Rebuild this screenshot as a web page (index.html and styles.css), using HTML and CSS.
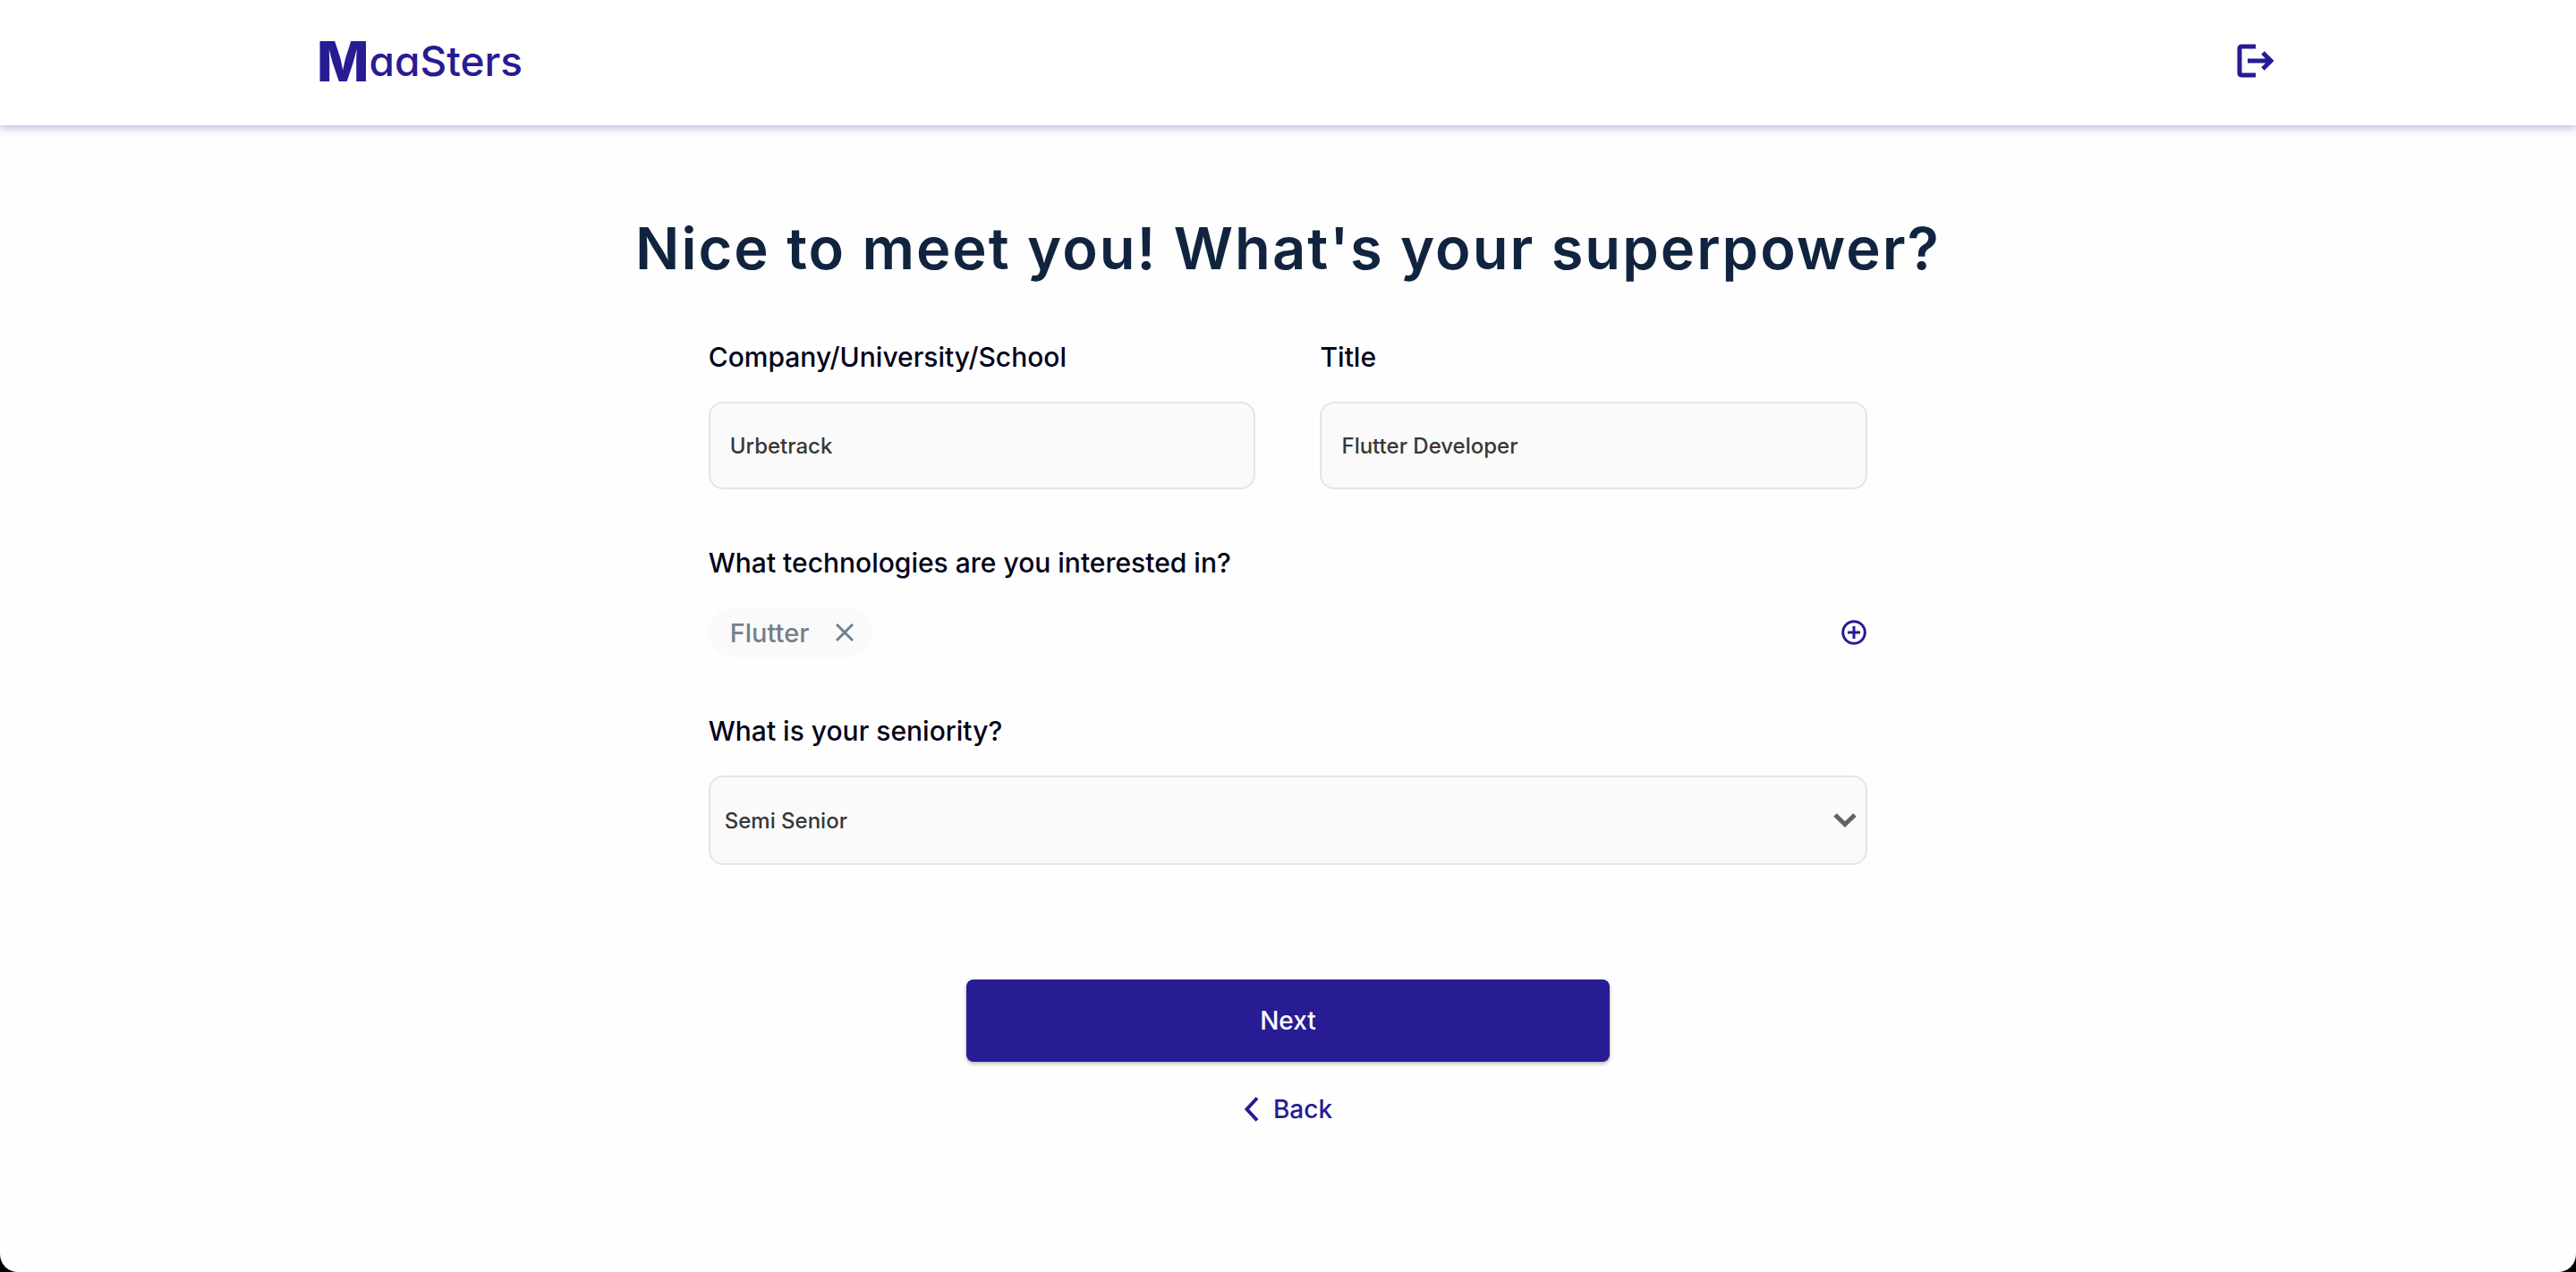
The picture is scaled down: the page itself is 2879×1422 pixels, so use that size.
FILE: index.html
```html
<!DOCTYPE html>
<html lang="en">
<head>
  <meta charset="utf-8">
  <meta name="viewport" content="width=device-width, initial-scale=1">
  <title>MaaSters</title>
  <link rel="stylesheet" href="styles.css">
</head>
<body>
  <div class="page">
    <header class="header">
      <a class="logo" href="#"><span class="logo-initial">M</span><span class="logo-rest">aaSters</span></a>
      <button class="icon-button" type="button" aria-label="Log out">
        <svg width="42" height="38" viewBox="0 0 42 38" fill="none" stroke="currentColor" stroke-width="5">
          <path d="M21 3H5.500Q3 3 3 5.500V32.500Q3 35 5.500 35H21"/>
          <path d="M12 19H37M29 10L38 19L29 28"/>
        </svg>
      </button>
    </header>
    <main class="content">
      <h1 class="heading">Nice to meet you! What's your superpower?</h1>
      <form class="form">
        <div class="pair">
          <div class="field">
            <label class="label" for="company">Company/University/School</label>
            <input class="control" id="company" type="text" value="Urbetrack">
          </div>
          <div class="field">
            <label class="label" for="title">Title</label>
            <input class="control" id="title" type="text" value="Flutter Developer">
          </div>
        </div>
        <section class="field" aria-labelledby="technologies">
          <h2 class="label" id="technologies">What technologies are you interested in?</h2>
          <div class="chips">
            <span class="chip">Flutter
              <button class="icon-button" type="button" aria-label="Remove Flutter">
                <svg width="20" height="20" viewBox="0 0 20 20" fill="none" stroke="currentColor" stroke-width="3">
                  <path d="M1 1L19 19M19 1L1 19"/>
                </svg>
              </button>
            </span>
            <button class="icon-button" type="button" aria-label="Add technology">
              <svg width="29" height="28" viewBox="0 0 29 28" fill="none" stroke="currentColor" stroke-width="3">
                <circle cx="14" cy="14" r="12.300"/>
                <path d="M7 14H21M14 7V21"/>
              </svg>
            </button>
          </div>
        </section>
        <div class="field">
          <label class="label" for="seniority">What is your seniority?</label>
          <div class="select">
            <select class="control control-select" id="seniority">
              <option>Junior</option>
              <option selected>Semi Senior</option>
              <option>Senior</option>
            </select>
            <svg class="select-arrow" width="26" height="18" viewBox="0 0 26 18" fill="none" stroke="currentColor" stroke-width="5">
              <path d="M2 3L13 13.500L24 3"/>
            </svg>
          </div>
        </div>
        <div class="actions">
          <button class="next" type="submit">Next</button>
          <button class="back" type="button">
            <svg width="17" height="28" viewBox="0 0 17 28" fill="none" stroke="currentColor" stroke-width="4">
              <path d="M15 1.500L3.500 14L15 26.500"/>
            </svg>
            Back
          </button>
        </div>
      </form>
    </main>
  </div>
</body>
</html>
```
FILE: styles.css
```css
* {
  box-sizing: border-box;
}

html {
  background: #000;
}

body {
  margin: 0;
  font-family: Inter, "Liberation Sans", sans-serif;
  font-weight: 500;
  color: #03031a;
}

button,
input,
select {
  font: inherit;
  color: inherit;
}

.page {
  min-height: 100vh;
  background: #fefefe;
  border-radius: 0 0 20px 20px;
}

.header {
  display: flex;
  align-items: center;
  justify-content: space-between;
  height: 140px;
  padding: 0 11.700% 4px 12.300%;
  background: #fff;
  box-shadow: 0 4px 8px rgba(39, 28, 147, 0.25);
  color: #271c93;
}

.logo {
  display: flex;
  align-items: center;
  color: inherit;
  text-decoration: none;
}

.logo-initial {
  font-size: 62px;
  font-weight: 800;
}

.logo-rest {
  font-size: 46px;
  font-feature-settings: "cv11";
}

.icon-button {
  display: flex;
  padding: 0;
  border: 0;
  background: none;
  cursor: pointer;
}

.content {
  display: flex;
  flex-direction: column;
  align-items: center;
  padding: 96px 24px;
}

.heading {
  margin: 0;
  font-size: 65px;
  line-height: 84px;
  font-weight: 600;
  letter-spacing: 2px;
  color: #11243f;
}

.form {
  display: flex;
  flex-direction: column;
  gap: 62px;
  width: 45vw;
  margin-top: 59px;
}

.pair {
  display: grid;
  grid-template-columns: 1fr 1fr;
  gap: 72px;
}

.field {
  display: flex;
  flex-direction: column;
  gap: 30px;
}

.label {
  margin: 0;
  font-size: 30px;
  line-height: 40px;
  font-weight: 500;
}

.control {
  width: 100%;
  height: 98px;
  padding: 0 22px;
  border: 2px solid #e4e4ea;
  border-radius: 16px;
  background: #fafafa;
  font-size: 24px;
  color: #373737;
}

.chips {
  display: flex;
  align-items: center;
  justify-content: space-between;
}

.chip {
  display: flex;
  align-items: center;
  gap: 30px;
  height: 56px;
  padding: 0 22px 0 24px;
  border-radius: 28px;
  background: #fafafa;
  font-size: 29px;
  color: #71808e;
}

.chips > .icon-button {
  color: #271c93;
}

.select {
  display: grid;
  align-items: center;
}

.select > * {
  grid-area: 1 / 1;
}

.control-select {
  height: 100px;
  padding: 0 16px;
  appearance: none;
}

.select-arrow {
  justify-self: end;
  margin-right: 12px;
  color: #626262;
  pointer-events: none;
}

.actions {
  display: flex;
  flex-direction: column;
  align-items: center;
  gap: 36px;
  margin-top: 66px;
}

.next {
  width: 25vw;
  height: 92px;
  border: 0;
  border-radius: 8px;
  background: #271c93;
  box-shadow: 0 2px 4px rgba(0, 0, 0, 0.3);
  font-size: 28px;
  color: #fff;
}

.back {
  display: flex;
  align-items: center;
  gap: 16px;
  padding: 0;
  border: 0;
  background: none;
  font-size: 28px;
  color: #271c93;
}
```
